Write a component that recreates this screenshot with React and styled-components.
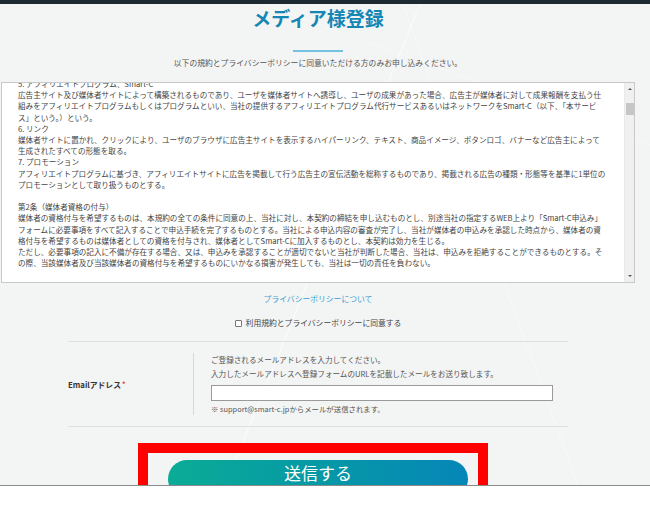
import React from "react";
import styled, { createGlobalStyle } from "styled-components";

const Global = createGlobalStyle`
  html, body { margin: 0; padding: 0; background: #ffffff; }
  body { font-family: "Noto Sans CJK JP", "Noto Sans", sans-serif; }
  * { box-sizing: border-box; }
`;

const Page = styled.div`
  width: 650px;
  height: 485px;
  overflow: hidden;
  background-color: #f3f4f4;
  background-image:
    linear-gradient(112deg, transparent 49.7%, rgba(255,255,255,0.6) 49.85%, transparent 50%),
    linear-gradient(70deg, transparent 69.8%, rgba(255,255,255,0.5) 69.9%, transparent 70%),
    linear-gradient(20deg, transparent 79.85%, rgba(255,255,255,0.5) 79.92%, transparent 80%);
  display: flex;
  flex-direction: column;
`;

const TopBar = styled.div`
  height: 4px;
  flex: none;
  background: #1d2a32;
`;

const Content = styled.div`
  width: 636px;
  display: flex;
  flex-direction: column;
  align-items: center;
`;

const Title = styled.h1`
  margin: 2px 0 0;
  font-size: 19px;
  line-height: 24px;
  font-weight: 700;
  color: #1687b5;
`;

const Rule = styled.div`
  width: 50px;
  height: 2px;
  margin-top: 20px;
  background: #74c2e2;
`;

const Lead = styled.p`
  margin: 5px 0 0;
  font-size: 7.8px;
  line-height: 12px;
  color: #555;
`;

const TermsBox = styled.div`
  align-self: flex-start;
  margin: 13px 0 0 1px;
  width: 634px;
  height: 201px;
  border: 1px solid #c9c9c9;
  background: #fff;
  display: flex;
`;

const TermsView = styled.div`
  flex: 1;
  overflow: hidden;
  padding: 0 0 0 16px;
`;

const TermsInner = styled.div`
  margin-top: ${(p) => p.$offset}px;
  font-size: 7.6px;
  line-height: 11.2px;
  color: #444;
`;

const TermsLine = styled.div`
  white-space: nowrap;
  min-height: 11.2px;
`;

const Scrollbar = styled.div`
  width: 10px;
  flex: none;
  background: #f0f0f0;
  border-left: 1px solid #eaeaea;
  display: flex;
  flex-direction: column;
  align-items: center;
`;

const Arrow = styled.div`
  width: 0;
  height: 0;
  border-left: 2px solid transparent;
  border-right: 2px solid transparent;
  ${(p) => (p.$down ? "border-top: 2px solid #555;" : "border-bottom: 2px solid #555;")}
  margin: ${(p) => (p.$down ? "auto 0 5px" : "5px 0 0")};
`;

const Thumb = styled.div`
  width: 8px;
  height: 12px;
  margin-top: 13px;
  background: #c6c6c6;
`;

const PolicyLink = styled.a`
  margin-top: 10px;
  font-size: 7.8px;
  line-height: 12px;
  color: #3a9ed3;
  text-decoration: none;
`;

const AgreeRow = styled.label`
  margin-top: 12px;
  display: flex;
  align-items: center;
  gap: 4px;
  font-size: 7.8px;
  line-height: 12px;
  color: #444;
`;

const Box = styled.span`
  width: 7px;
  height: 7px;
  border: 1px solid #777;
  background: #fff;
  border-radius: 1px;
`;

const Form = styled.div`
  margin-top: 12px;
  width: 500px;
  border-top: 1px solid #e0e0e0;
  border-bottom: 1px solid #e0e0e0;
  display: grid;
  grid-template-columns: 125px 1fr;
  padding: 11px 0 11px;
`;

const Label = styled.div`
  display: flex;
  align-items: center;
  font-size: 7.8px;
  font-weight: 700;
  color: #333;
`;

const Req = styled.sup`
  color: #e53935;
  font-size: 7px;
  margin-left: 1px;
`;

const Field = styled.div`
  border-left: 1px solid #d8d8d8;
  padding-left: 17px;
  display: flex;
  flex-direction: column;
`;

const Help = styled.div`
  font-size: 7.6px;
  line-height: 14px;
  color: #555;
`;

const Input = styled.input`
  margin-top: 4px;
  width: 342px;
  height: 16px;
  border: 1px solid #9a9a9a;
  background: #fff;
  padding: 0 4px;
`;

const Note = styled.div`
  margin-top: 2px;
  font-size: 7.4px;
  line-height: 12px;
  color: #555;
`;

const ButtonWrap = styled.div`
  position: relative;
  margin-top: 33px;
  display: flex;
  justify-content: center;
`;

const Submit = styled.button`
  width: 300px;
  height: 38px;
  border: none;
  border-radius: 19px;
  background: linear-gradient(90deg, #0bac96 0%, #0699a6 50%, #0686b8 100%);
  color: #fff;
  font-family: "Noto Sans CJK JP", sans-serif;
  font-size: 17px;
  line-height: 22px;
  padding: 0 0 12px;
`;

const Highlight = styled.div`
  position: absolute;
  left: -30px;
  right: -20px;
  top: -17px;
  height: 63px;
  border: 10px solid #ff0000;
  pointer-events: none;
`;

const Footer = styled.div`
  height: 20px;
  background: #fff;
  border-top: 1px solid #8a8a8a;
`;

const lines = [
  "5. アフィリエイトプログラム、Smart-C",
  "広告主サイト及び媒体者サイトによって構築されるものであり、ユーザを媒体者サイトへ誘導し、ユーザの成果があった場合、広告主が媒体者に対して成果報酬を支払う仕",
  "組みをアフィリエイトプログラムもしくはプログラムといい、当社の提供するアフィリエイトプログラム代行サービスあるいはネットワークをSmart-C（以下、「本サービ",
  "ス」という。）という。",
  "6. リンク",
  "媒体者サイトに置かれ、クリックにより、ユーザのブラウザに広告主サイトを表示するハイパーリンク、テキスト、商品イメージ、ボタンロゴ、バナーなど広告主によって",
  "生成されたすべての形態を取る。",
  "7. プロモーション",
  "アフィリエイトプログラムに基づき、アフィリエイトサイトに広告を掲載して行う広告主の宣伝活動を総称するものであり、掲載される広告の種類・形態等を基準に1単位の",
  "プロモーションとして取り扱うものとする。",
  "",
  "第2条（媒体者資格の付与）",
  "媒体者の資格付与を希望するものは、本規約の全ての条件に同意の上、当社に対し、本契約の締結を申し込むものとし、別途当社の指定するWEB上より「Smart-C申込み」",
  "フォームに必要事項をすべて記入することで申込手続を完了するものとする。当社による申込内容の審査が完了し、当社が媒体者の申込みを承認した時点から、媒体者の資",
  "格付与を希望するものは媒体者としての資格を付与され、媒体者としてSmart-Cに加入するものとし、本契約は効力を生じる。",
  "ただし、必要事項の記入に不備が存在する場合、又は、申込みを承認することが適切でないと当社が判断した場合、当社は、申込みを拒絶することができるものとする。そ",
  "の際、当該媒体者及び当該媒体者の資格付与を希望するものにいかなる損害が発生しても、当社は一切の責任を負わない。",
];

export default function App() {
  return (
    <>
      <Global />
      <Page>
        <TopBar />
        <Content>
          <Title>メディア様登録</Title>
          <Rule />
          <Lead>以下の規約とプライバシーポリシーに同意いただける方のみお申し込みください。</Lead>
          <TermsBox>
            <TermsView>
              <TermsInner $offset={-5}>
                {lines.map((l, i) => (
                  <TermsLine key={i}>{l}</TermsLine>
                ))}
              </TermsInner>
            </TermsView>
            <Scrollbar>
              <Arrow />
              <Thumb />
              <Arrow $down />
            </Scrollbar>
          </TermsBox>
          <PolicyLink href="#">プライバシーポリシーについて</PolicyLink>
          <AgreeRow>
            <Box />
            利用規約とプライバシーポリシーに同意する
          </AgreeRow>
          <Form>
            <Label>
              Emailアドレス<Req>*</Req>
            </Label>
            <Field>
              <Help>ご登録されるメールアドレスを入力してください。</Help>
              <Help>入力したメールアドレスへ登録フォームのURLを記載したメールをお送り致します。</Help>
              <Input type="text" />
              <Note>※ support@smart-c.jpからメールが送信されます。</Note>
            </Field>
          </Form>
          <ButtonWrap>
            <Submit>送信する</Submit>
            <Highlight />
          </ButtonWrap>
        </Content>
      </Page>
      <Footer />
    </>
  );
}
